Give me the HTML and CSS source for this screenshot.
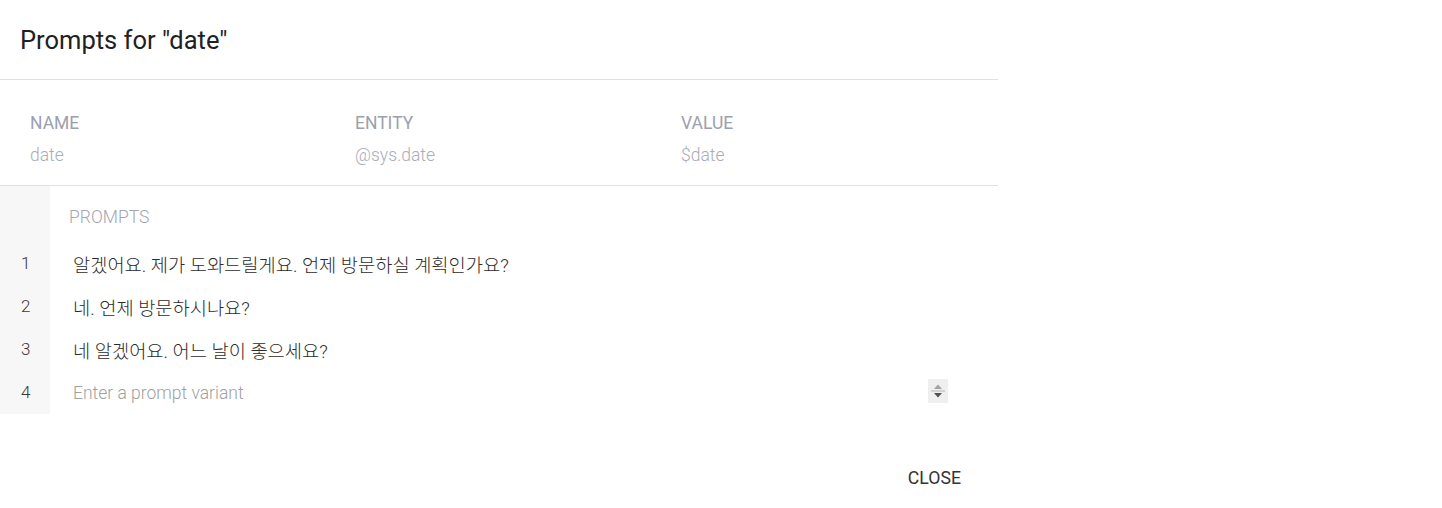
FILE: index.html
```html
<!DOCTYPE html>
<html lang="ko">
<head>
<meta charset="utf-8">
<title>Prompts</title>
<link rel="stylesheet" href="styles.css">
</head>
<body>
<div class="dialog">
  <div class="header">
    <h1 class="title">Prompts for "date"</h1>
  </div>
  <div class="params">
    <div class="param">
      <div class="label">NAME</div>
      <div class="value">date</div>
    </div>
    <div class="param">
      <div class="label">ENTITY</div>
      <div class="value">@sys.date</div>
    </div>
    <div class="param">
      <div class="label">VALUE</div>
      <div class="value">$date</div>
    </div>
  </div>
  <div class="prompts">
    <div class="row head"><span class="num"></span><span class="prompts-label">PROMPTS</span></div>
    <div class="row"><span class="num">1</span><span class="text ko">알겠어요. 제가 도와드릴게요. 언제 방문하실 계획인가요?</span></div>
    <div class="row"><span class="num">2</span><span class="text ko">네. 언제 방문하시나요?</span></div>
    <div class="row"><span class="num">3</span><span class="text ko">네 알겠어요. 어느 날이 좋으세요?</span></div>
    <div class="row last"><span class="num">4</span><span class="text placeholder">Enter a prompt variant</span>
      <span class="spinner">
        <svg width="20" height="24" viewBox="0 0 20 24">
          <rect width="20" height="24" fill="#efefef"/>
          <path d="M6 10 L10 5.5 L14 10 Z" fill="#a3a3a3"/>
          <rect x="3" y="11.5" width="14" height="1" fill="#b5b5b5"/>
          <path d="M6 14 L14 14 L10 18.5 Z" fill="#505050"/>
        </svg>
      </span>
    </div>
  </div>
  <div class="actions">
    <button class="close">CLOSE</button>
  </div>
</div>
</body>
</html>
```
FILE: styles.css
```css
html, body {
  margin: 0;
  padding: 0;
  background: #fff;
}
body {
  font-family: Roboto, "Noto Sans CJK KR", sans-serif;
  color: #333;
}
.dialog {
  width: 998px;
}
.header {
  height: 79px;
  border-bottom: 1px solid #e0e0e0;
  padding: 0 20px;
  display: flex;
  align-items: center;
}
.title {
  margin: 0;
  font-size: 25.5px;
  font-weight: 400;
  color: #212121;
}
.params {
  display: grid;
  grid-template-columns: 325px 326px 1fr;
  padding: 30px 0 20px 30px;
  height: 55px;
  border-bottom: 1px solid #e0e0e0;
}
.label {
  font-size: 17.5px;
  font-weight: 400;
  color: #9ba0ae;
  line-height: 20px;
  margin-top: 3px;
}
.value {
  font-size: 17.5px;
  font-weight: 300;
  color: #a9adb8;
  line-height: 20px;
  margin-top: 12px;
}
.prompts {
  display: flex;
  flex-direction: column;
}
.row {
  display: flex;
  align-items: center;
  height: 43px;
}
.row.head {
  height: 55px;
  align-items: flex-start;
}
.row.last {
  height: 44px;
}
.num {
  width: 29px;
  height: 100%;
  padding-left: 21px;
  flex: none;
  background: #f7f7f7;
  display: flex;
  align-items: center;
  font-size: 17px;
  font-weight: 300;
  color: #3a3a3a;
}
.row.last .num {
  padding-bottom: 1px;
  height: 43px;
  align-self: flex-start;
}
.prompts-label {
  margin: 21px 0 0 19px;
  font-size: 17.5px;
  font-weight: 300;
  color: #a2a6b1;
  line-height: 20px;
}
.text {
  margin-left: 23px;
  font-size: 17.5px;
  color: #333;
  position: relative;
  top: 1px;
}
.text.ko {
  font-size: 18.7px;
  font-weight: 300;
  color: #2b2b2b;
}
.placeholder {
  font-weight: 300;
  color: #a0a0a0;
}
.spinner {
  margin-left: auto;
  margin-right: 50px;
  width: 20px;
  height: 24px;
  display: block;
  align-self: flex-start;
  margin-top: 9px;
}
.spinner svg { display: block; }
.actions {
  display: flex;
  justify-content: flex-end;
  padding: 54px 37px 0 0;
}
.close {
  background: none;
  border: none;
  padding: 0;
  font-family: Roboto, sans-serif;
  font-size: 17.7px;
  color: #333;
  cursor: pointer;
}
```
